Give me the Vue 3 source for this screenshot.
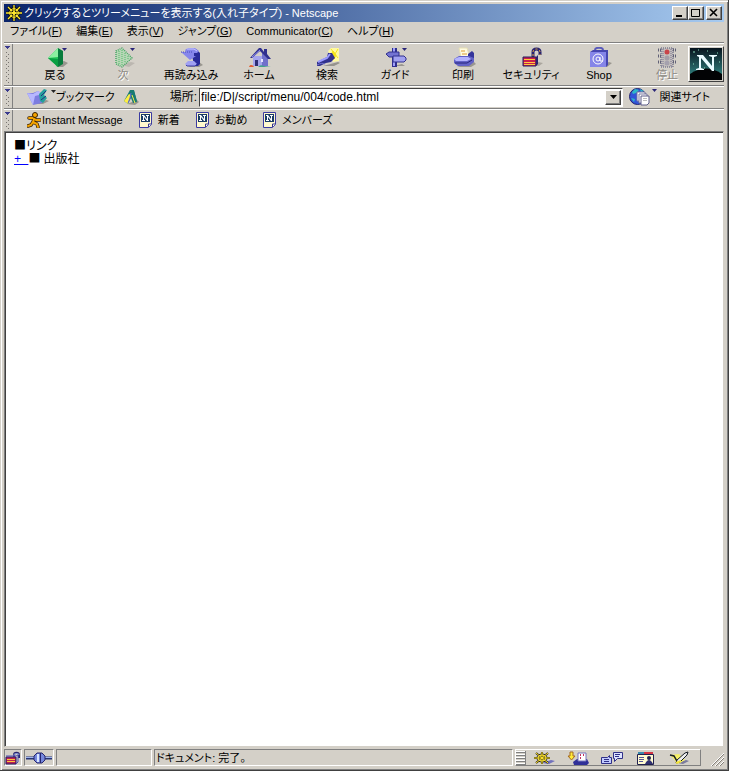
<script setup>
import { ref } from 'vue'

const title = 'クリックするとツリーメニューを表示する(入れ子タイプ) - Netscape'
const address = ref('file:/D|/script/menu/004/code.html')

const menus = [
  { label: 'ファイル', key: 'F' },
  { label: '編集', key: 'E' },
  { label: '表示', key: 'V' },
  { label: 'ジャンプ', key: 'G' },
  { label: 'Communicator', key: 'C' },
  { label: 'ヘルプ', key: 'H' },
]

const tools = [
  { id: 'back', label: '戻る', menu: true },
  { id: 'next', label: '次', menu: true, disabled: true },
  { id: 'reload', label: '再読み込み' },
  { id: 'home', label: 'ホーム' },
  { id: 'search', label: '検索' },
  { id: 'guide', label: 'ガイド', menu: true },
  { id: 'print', label: '印刷' },
  { id: 'security', label: 'セキュリティ' },
  { id: 'shop', label: 'Shop' },
  { id: 'stop', label: '停止', disabled: true },
]

const links = ['新着', 'お勧め', 'メンバーズ']
const components = ['navigator', 'mail', 'news', 'addressbook', 'composer']
const componentNames = ['Navigator', 'メール', 'ニュース', 'アドレス帳', 'Composer']
</script>

<template>
  <div class="window">
    <header class="titlebar">
      <svg class="app-icon" viewBox="0 0 16 16" aria-hidden="true">
        <path d="M8 0v16M0 8h16M2 2l12 12M14 2L2 14" stroke="#111" stroke-width="3" />
        <circle cx="8" cy="8" r="4.5" fill="none" stroke="#111" stroke-width="3" />
        <path d="M8 0v16M0 8h16M2 2l12 12M14 2L2 14" stroke="#ffe92e" stroke-width="1.3" />
        <circle cx="8" cy="8" r="4.3" fill="none" stroke="#ffe92e" />
        <path d="M6 6h1v1H6zM9 6h1v1H9zM6 9h1v1H6zM9 9h1v1H9z" fill="#111" />
      </svg>
      <h1>{{ title }}</h1>
      <div class="captions">
        <button type="button" class="caption" aria-label="最小化">
          <svg viewBox="0 0 12 10"><path d="M2 8h6" stroke="#000" stroke-width="2" /></svg>
        </button>
        <button type="button" class="caption" aria-label="最大化">
          <svg viewBox="0 0 12 10"><path d="M1.500 1.500h8v7h-8z" fill="none" stroke="#000" /><path d="M1 1h9v1H1z" /></svg>
        </button>
        <button type="button" class="caption close" aria-label="閉じる">
          <svg viewBox="0 0 12 10"><path d="M2 1l7 7M9 1L2 8" stroke="#000" stroke-width="1.6" /></svg>
        </button>
      </div>
    </header>

    <nav class="menubar">
      <button v-for="m in menus" :key="m.key" type="button">{{ m.label }}(<u>{{ m.key }}</u>)</button>
    </nav>

    <div class="bar tools">
      <button type="button" class="grip" aria-label="ツールバーを隠す"></button>
      <div class="tool-list">
        <button v-for="t in tools" :key="t.id" type="button" class="tool" :disabled="t.disabled">
          <svg class="tool-icon" viewBox="-3 0 28 21" aria-hidden="true">
            <g v-if="t.id === 'back'">
              <path d="M11 17l9-3 4 2-5 4h-6z" fill="#99968f" />
              <path d="M4 11L14 1v19z" fill="#22c555" />
              <path d="M4 11L14 1v9z" fill="#8cf0a0" />
              <path d="M14 1l5 3v13l-5 3z" fill="#087c3d" />
              <path d="M4 11l10 9v-8z" fill="#0a9f43" />
            </g>
            <g v-else-if="t.id === 'next'">
              <path d="M9 18l10-3 4 1-6 4z" fill="#bbb7b0" />
              <path d="M4 4l6-3 10 10-10 9-6-3z" fill="#b7d6b6" />
              <path d="M4 4l6-3 10 10-10 9-6-3z" fill="none" stroke="#42a360" stroke-width="1.4" stroke-dasharray="1 1" />
              <path d="M7 4v14M10 3v16M13 6v10M16 9v4" stroke="#52bd6b" stroke-dasharray="1 1" />
            </g>
            <g v-else-if="t.id === 'reload'">
              <path d="M8 20l11-5 4 3-4 2z" fill="#99968f" />
              <path d="M11 4l5-2 4 4v11l-2 2h-4l-1-6z" fill="#292a99" />
              <path d="M5 3l3-2h7l4 3-2 2h-3v3h2l-6 4-9-8h5z" fill="#8585ec" />
              <path d="M1 5h12" stroke="#4a4ab8" stroke-dasharray="1 1" />
              <path d="M7 2h7l3 2" fill="none" stroke="#c9c9ff" />
              <path d="M8 14h6l3 3-2 2H7l-2-2z" fill="#a0a0f2" />
              <path d="M6 18l1 1h8l2-2" fill="none" stroke="#3c3ca8" />
            </g>
            <g v-else-if="t.id === 'home'">
              <path d="M5 9h15v10H5z" fill="#a5a5ed" />
              <path d="M14 5l6 6v8h-6z" fill="#7070cb" />
              <path d="M2 11L11 1h2l3 4V2h3v5l4 5h-3l-8-8-8 7z" fill="#30308e" />
              <path d="M4 10l8-7" stroke="#9191f1" />
              <path d="M7 13h3v6H7z" fill="#2e2d74" />
              <path d="M13 12h2v3h-2z" fill="#e5e5ff" />
              <path d="M1 20c1-3 4-2 5 0z" fill="#e35d32" />
              <path d="M10 20c2-2 4-2 6-1l7 1z" fill="#41a08d" />
            </g>
            <g v-else-if="t.id === 'search'">
              <path d="M12 4l3-3h8v13l-6 1z" fill="#fff9a0" />
              <path d="M17 4l3 4-2 4-3-4zM15 2l7 9M22 2l-6 10" fill="#f3e51b" stroke="#f3e51b" />
              <path d="M7 19l15-4 2 1-6 3z" fill="#96938d" />
              <path d="M1 15l10-5 1-4h4l3 5-4 4-5 1-6 3H1z" fill="#31318e" />
              <path d="M2 15l9-4 3-4" fill="none" stroke="#9b9bff" stroke-width="2" />
              <path d="M1 18c4-2 6-2 8-1" fill="none" stroke="#7171cc" />
            </g>
            <g v-else-if="t.id === 'guide'">
              <path d="M9 19l9-2 3 2z" fill="#99968f" />
              <path d="M8 1h5v19H8z" fill="#30308e" />
              <path d="M10 1v18" stroke="#a0a0fa" stroke-width="2" />
              <path d="M2 7l3-2h10v5H5z" fill="#7373d2" stroke="#30308e" />
              <path d="M9 9h11l2 2v2l-2 2H9z" fill="#a1a1f0" stroke="#30308e" />
            </g>
            <g v-else-if="t.id === 'print'">
              <path d="M5 19l17-4 2 2-5 3H8z" fill="#99968f" />
              <path d="M7 1l8 0 3 10H9z" fill="#fffbe0" stroke="#e6dfb4" />
              <path d="M9 4h4M10 7h5" stroke="#de9d31" />
              <path d="M16 7l4-3 2 2v7h-6z" fill="#34349b" />
              <path d="M2 12l5-3h10l5 2v4l-5 4H6l-4-3z" fill="#6262c7" />
              <path d="M2 12l5-2h9l3 2-4 2H4z" fill="#b3b3ff" />
              <path d="M3 16h12l5-3" fill="none" stroke="#25257d" />
            </g>
            <g v-else-if="t.id === 'security'">
              <path d="M7 19l11-4 5 1-4 3z" fill="#aaa69e" />
              <path d="M13 10V5c0-4 7-4 7 0v3" fill="none" stroke="#292471" stroke-width="3" />
              <path d="M13 9V5c0-4 7-4 7 0v3" fill="none" stroke="#e3a43c" stroke-dasharray="2 2" />
              <path d="M3 10h13v9H3z" fill="#c91e4d" stroke="#25215f" />
              <path d="M4 12.500h11M4 15.500h11M4 17.500h11" stroke="#ffc93b" />
              <path d="M16 10l2-2v9l-2 2z" fill="#29256e" />
            </g>
            <g v-else-if="t.id === 'shop'">
              <path d="M7 20l14-5 3 1-5 4z" fill="#99968f" />
              <path d="M7 6V3c0-3 8-3 8 0v3" fill="none" stroke="#5959ba" stroke-width="2" />
              <path d="M2 5l3-2h15v15l-2 2H2z" fill="#4646b0" />
              <path d="M2 5h16v15H2z" fill="#8585e8" />
              <circle cx="10" cy="12" r="5" fill="none" stroke="#fff" />
              <circle cx="10" cy="12" r="2" fill="none" stroke="#fff" />
              <path d="M12 10v4h3" fill="none" stroke="#fff" />
            </g>
            <g v-else>
              <path d="M5 1h12v19H5z" fill="#c4c0bd" stroke="#555578" stroke-dasharray="1 1" />
              <path d="M2 3h3M2 9h3M2 15h3M17 3h4M17 9h4M17 15h4" stroke="#606076" stroke-width="3" stroke-dasharray="1 1" />
              <circle cx="11" cy="5" r="2.500" fill="#c94449" />
              <circle cx="11" cy="11" r="2.500" fill="#a59fa8" />
              <circle cx="11" cy="16" r="2.500" fill="#a5a1ae" />
              <path d="M7 2v17M15 2v17" stroke="#777092" stroke-dasharray="1 1" />
            </g>
            <path v-if="t.menu" d="M18 1h5l-2.500 3z" fill="#292477" />
          </svg>
          <span>{{ t.label }}</span>
        </button>
      </div>
      <a class="logo" href="#" aria-label="Netscape">
        <svg viewBox="0 0 32 32" aria-hidden="true">
          <defs>
            <linearGradient id="sky" x1="0" y1="0" x2="0" y2="1">
              <stop offset="0" stop-color="#07131d" />
              <stop offset="1" stop-color="#36928e" />
            </linearGradient>
          </defs>
          <path fill="url(#sky)" d="M0 0h32v32H0z" />
          <path d="M0 26q16-11 32 0v6H0z" fill="#020305" />
          <path d="M3 4h2M8 2h1M27 5h1M29 14h1M3 16h1M17 3h1M14 20h1" stroke="#8db" />
          <path d="M7 7h6l9 11V9l-3-1V7h8v1l-3 1v14h-2L11 10v10l3 1v1H6v-1l3-1V9L7 8z" fill="#e9fbff" />
        </svg>
      </a>
    </div>

    <div class="bar location">
      <button type="button" class="grip" aria-label="場所ツールバーを隠す"></button>
      <button type="button" class="bookmark">
        <svg class="bookmark-icon" viewBox="0 0 30 18" aria-hidden="true">
          <path d="M8 16l12-4 3 1-6 3z" fill="#99968f" />
          <path d="M1 5l6 0 5-2 5 3-1 9-9 2z" fill="#7d7de0" />
          <path d="M1 5l6 12 2-9 8-2-5-3-5 3z" fill="#b7b7ff" />
          <path d="M13 6l5-5 3 1-3 5 3 3-4 5-3-2z" fill="#24a09d" />
          <path d="M15 8l5-5M15 12l5-4" stroke="#25317d" />
          <path d="M25 2h5l-2.500 3z" fill="#222" />
        </svg>
        <span>ブックマーク</span>
      </button>
      <button type="button" class="quickfile" aria-label="ブックマーク登録">
        <svg viewBox="0 0 17 18" aria-hidden="true">
          <path d="M4 16l10-4 2 2-4 3z" fill="#99968f" />
          <path d="M7 2h4l3 12-4 1-2-5-3 6-4-3z" fill="#187b73" />
          <path d="M6 6l2 1-3 9-4-3z" fill="#ffef43" />
          <path d="M8 5l-1 5-2 5" stroke="#6064ce" fill="none" />
          <path d="M9 7l3 8" stroke="#ffef43" />
          <path d="M10 3l3 10" stroke="#187b73" stroke-width="2" />
        </svg>
      </button>
      <label for="address">場所:</label>
      <div class="combo">
        <input id="address" v-model="address" type="text" spellcheck="false">
        <button type="button" aria-label="履歴を表示">
          <svg viewBox="0 0 7 4"><path d="M0 0h7L3.500 4z" /></svg>
        </button>
      </div>
      <button type="button" class="related">
        <svg class="related-icon" viewBox="0 0 28 18" aria-hidden="true">
          <circle cx="8.500" cy="8.500" r="8" fill="#3155d8" stroke="#22226e" />
          <path d="M3 4l3-3 4 1-3 3-3 1zM2 10l4 1-1 3zM11 1l4 2-3 1z" fill="#2db8c7" />
          <path d="M8 4h8v9H8z" fill="#fff" stroke="#77779f" />
          <path d="M10 6h8v9h-8z" fill="#fff" stroke="#77779f" />
          <path d="M12 8h8v7l-2 2h-6z" fill="#fff" stroke="#5c5c88" />
          <path d="M14 10.500h4M14 12.500h4" stroke="#bbb" />
          <path d="M23 1h5l-2.500 3z" fill="#292477" />
        </svg>
        <span>関連サイト</span>
      </button>
    </div>

    <div class="bar personal">
      <button type="button" class="grip" aria-label="個人ツールバーを隠す"></button>
      <a class="im" href="#">
        <svg class="runner" viewBox="0 0 14 16" aria-hidden="true">
          <g fill="none" stroke-linecap="round" stroke-linejoin="round">
            <path d="M2 6l4 0 3 2 4 0M7 7l-1 3-2 3-3 1M6 10l4 2 1 3" stroke="#392000" stroke-width="3.500" />
            <path d="M2 6l4 0 3 2 4 0M7 7l-1 3-2 3-3 1M6 10l4 2 1 3" stroke="#f5a400" stroke-width="2" />
          </g>
          <circle cx="8" cy="3" r="2.500" fill="#f5a400" stroke="#392000" />
        </svg>
        <span>Instant Message</span>
      </a>
      <a v-for="l in links" :key="l" class="page-link" href="#">
        <svg class="page-icon" viewBox="0 0 13 16" aria-hidden="true">
          <path d="M.5 .5h12v12l-3 3h-9z" fill="#fff9ce" stroke="#3b3ba2" />
          <path d="M2 2h9v8H2z" fill="#173a65" />
          <path d="M3 3h2l3 4V4H7V3h3v1H9v5H8L5 5v3h1v1H3V8h1V4H3z" fill="#fff" />
          <path d="M9.500 15v-3h3" fill="#fff" stroke="#33338b" />
        </svg>
        <span>{{ l }}</span>
      </a>
    </div>

    <main class="page">
      <div>■リンク</div>
      <div><a href="#">+ </a>■ 出版社</div>
    </main>

    <footer class="status">
      <button type="button" class="cell lock" aria-label="セキュリティ情報">
        <svg viewBox="0 0 16 14" aria-hidden="true">
          <path d="M9 6V4c0-3 5-3 5 0v3" fill="none" stroke="#29256e" stroke-width="2" />
          <path d="M9 5V4c0-2 5-2 5 0" fill="none" stroke="#9bb0f0" />
          <path d="M1 6h10v7H1z" fill="#bd2352" stroke="#24206b" />
          <path d="M2 8.500h8M2 10.500h8" stroke="#ffc53c" />
          <path d="M1 5h10l2-1v7l-2 2" fill="none" stroke="#4e4eae" />
        </svg>
      </button>
      <div class="cell plug">
        <svg viewBox="0 0 28 12" aria-hidden="true">
          <path d="M1 6h26" stroke="#273475" stroke-width="3" />
          <path d="M1 5.500h26" stroke="#a0b5ed" />
          <path d="M9 4l3-3h5l3 3v4l-3 3h-5L9 8z" fill="#7587dc" stroke="#25256f" />
          <path d="M13 2v8" stroke="#d9e5ff" stroke-width="2" />
          <path d="M15.500 1v10" stroke="#25256f" />
        </svg>
      </div>
      <div class="cell progress"></div>
      <div class="cell message">ドキュメント: 完了。</div>
      <div class="components">
        <div class="dock-grip"></div>
        <button v-for="(c, i) in components" :key="c" type="button" :aria-label="componentNames[i]">
          <svg viewBox="0 0 24 14" aria-hidden="true">
            <g v-if="c === 'navigator'" fill="none">
              <path d="M10 12l9-3 4 1-6 3z" fill="#7171bd" />
              <path d="M10 1v12M2 7h16M4 2l12 10M16 2L4 12" stroke="#252012" stroke-width="2" />
              <ellipse cx="10" cy="7" rx="5" ry="4" stroke="#252012" />
              <path d="M10 1v12M2 7h16M4 2l12 10M16 2L4 12" stroke="#ffe52a" />
              <ellipse cx="10" cy="7" rx="4" ry="3" stroke="#ffe52a" />
            </g>
            <g v-else-if="c === 'mail'">
              <path d="M7 11l4-3h10l2 4-2 2H8z" fill="#303098" />
              <path d="M12 2h8v8h-8z" fill="#fff" stroke="#7777bd" />
              <path d="M14 4h1M17 4h1M14 7h1" stroke="#c43160" stroke-width="2" />
              <path d="M4 1h3v4h2l-3.500 4L2 5h2z" fill="#ffeb37" stroke="#a66b20" />
            </g>
            <g v-else-if="c === 'news'" stroke="#303088">
              <path d="M1.500 6.500h6l2-2v2h2v6h-10z" fill="#c1cbff" />
              <path d="M13.500 1.500h9v6h-5l-3 3v-3h-1z" fill="#dde3ff" />
              <path d="M4 8.500h5M4 10.500h5M15 3.500h5M15 5.500h4" />
            </g>
            <g v-else-if="c === 'addressbook'">
              <path d="M3.500 3.500h16v10h-16z" fill="#fffbd0" stroke="#20204f" />
              <path d="M4 2h6" stroke="#3a8aaf" stroke-width="2" />
              <path d="M10 2h9" stroke="#d43545" stroke-width="2" />
              <circle cx="15" cy="7" r="2" fill="#202052" />
              <path d="M11 13q4-8 8 0z" fill="#303070" />
              <path d="M5 6.500h5M5 8.500h5M5 10.500h4" stroke="#55559b" />
            </g>
            <g v-else>
              <path d="M9 12l9-3 3 1-6 3z" fill="#7b7b9d" />
              <path d="M2 4l9-1 6 6-7 4z" fill="#f6f066" />
              <path d="M2 4l4 1 4 7" fill="none" stroke="#151b24" stroke-width="1.500" />
              <path d="M9 9l8-7 3-1-1 3-7 7-4 1z" fill="#eee" stroke="#151b24" />
              <path d="M8 12l5-2" stroke="#f6e63c" stroke-width="2" />
            </g>
          </svg>
        </button>
      </div>
      <svg class="resize" viewBox="0 0 14 14" aria-hidden="true">
        <path d="M1 14L14 1M5 14l9-9M9 14l5-5" stroke="#fff" />
        <path d="M2 14L14 2M6 14l8-8M10 14l4-4" stroke="#858079" />
      </svg>
    </footer>
  </div>
</template>

<style>
body {
  margin: 0;
  background: #d4d0c8;
}
</style>

<style scoped>
* {
  box-sizing: border-box;
}

.window {
  display: flex;
  flex-direction: column;
  min-height: 100vh;
  padding: 4px;
  color: #000;
  background: #d4d0c8;
  border-right: 1px solid #404040;
  border-bottom: 1px solid #404040;
  box-shadow: inset 1px 1px #d4d0c8, inset 2px 2px #fff, inset -1px -1px #808080;
  font: 11px/14px "Liberation Sans", "Noto Sans CJK JP", sans-serif;
  font-feature-settings: "palt";
}

button {
  padding: 0;
  border: 0;
  color: inherit;
  background: none;
  font: inherit;
  font-feature-settings: inherit;
  white-space: nowrap;
}

a {
  color: inherit;
  text-decoration: none;
}

svg {
  display: block;
  flex: none;
}

.titlebar {
  display: flex;
  align-items: center;
  height: 18px;
  padding: 0 2px;
  color: #fff;
  background: linear-gradient(90deg, #0a246a, #a6caf0);
}

.app-icon {
  width: 16px;
  height: 16px;
}

h1 {
  flex: 1;
  margin: 0 0 0 2px;
  overflow: hidden;
  font-size: 11px;
  font-weight: 400;
  white-space: nowrap;
}

.captions {
  display: flex;
}

.caption {
  display: grid;
  place-items: center;
  width: 16px;
  height: 14px;
  background: #d4d0c8;
  border: 1px solid;
  border-color: #fff #404040 #404040 #fff;
  box-shadow: inset -1px -1px #808080;
}

.caption svg {
  width: 12px;
  height: 10px;
}

.close {
  margin-left: 2px;
}

.menubar {
  display: flex;
  gap: 14px;
  height: 20px;
  padding: 0 6px 2px;
}

.bar {
  display: flex;
  align-items: center;
  border-top: 1px solid #808080;
  box-shadow: inset 0 1px #fff;
}

.grip {
  display: flex;
  flex: none;
  align-self: stretch;
  width: 9px;
  margin-top: 1px;
  padding: 8px 2px 2px;
  border-right: 1px solid #808080;
  background:
    linear-gradient(#3b3b8e, #3b3b8e) 1px 2px / 5px 1px no-repeat,
    linear-gradient(#3b3b8e, #3b3b8e) 2px 3px / 3px 1px no-repeat,
    linear-gradient(#3b3b8e, #3b3b8e) 3px 4px / 1px 1px no-repeat;
}

.grip::after {
  flex: 1;
  align-self: stretch;
  content: "";
  background:
    linear-gradient(#77736f 1px, transparent 1px) 0 0 / 1px 4px repeat-y,
    linear-gradient(#77736f 1px, transparent 1px) 2px 2px / 1px 4px repeat-y;
}

.tools {
  height: 43px;
}

.tool-list {
  display: flex;
  flex: 1;
  min-width: 0;
  padding-left: 8px;
}

.tool {
  display: flex;
  flex: 1 1 0;
  flex-direction: column;
  align-items: center;
  min-width: 0;
  padding-top: 1px;
}

.tool:last-child {
  flex: 0 0 55px;
  padding-left: 13px;
}

.tool-icon {
  width: 28px;
  height: 21px;
}

.tool:disabled {
  color: #8c8983;
  text-shadow: 1px 1px #fff;
}

.logo {
  flex: none;
  padding: 1px;
  border: 1px solid;
  border-color: #fff #404040 #404040 #fff;
}

.logo svg {
  width: 32px;
  height: 32px;
}

.location {
  height: 23px;
}

.bookmark,
.related {
  display: flex;
  align-items: center;
}

.bookmark {
  margin-left: 13px;
}

.bookmark-icon {
  width: 30px;
  height: 18px;
}

.quickfile {
  margin-left: 8px;
}

.quickfile svg {
  width: 17px;
  height: 18px;
}

label {
  margin: 0 2px 0 30px;
  font-size: 12px;
  white-space: nowrap;
}

.combo {
  display: flex;
  flex: 1;
  height: 19px;
  min-width: 0;
  padding: 1px;
  background: #fff;
  border: 1px solid;
  border-color: #404040 #fff #fff #404040;
}

input {
  flex: 1;
  min-width: 0;
  padding: 0;
  border: 0;
  outline: 0;
  color: #000;
  background: #fff;
  font: inherit;
  font-size: 12px;
}

.combo button {
  display: grid;
  place-items: center;
  width: 16px;
  background: #d4d0c8;
  border: 1px solid;
  border-color: #fff #404040 #404040 #fff;
  box-shadow: inset -1px -1px #808080;
}

.combo button svg {
  width: 7px;
  height: 4px;
}

.related {
  gap: 2px;
  margin: 0 14px 0 6px;
}

.related-icon {
  width: 28px;
  height: 18px;
}

.personal {
  height: 23px;
}

.im,
.page-link {
  display: flex;
  align-items: center;
}

.im {
  margin-left: 14px;
}

.runner {
  width: 14px;
  height: 16px;
  margin-right: 1px;
}

.page-link {
  gap: 6px;
  margin-left: 16px;
}

.page-icon {
  width: 13px;
  height: 16px;
}

.page {
  flex: 1;
  padding: 8px 9px;
  background: #fff;
  border: 1px solid;
  border-color: #808080 #d4d0c8 #d4d0c8 #808080;
  box-shadow: inset 1px 1px #404040;
  font: 12px/13px Roboto, "Noto Sans CJK JP", sans-serif;
  font-feature-settings: "palt";
}

.page a {
  color: #00f;
  font-family: "Liberation Mono", monospace;
  text-decoration: underline;
  white-space: pre;
}

.status {
  display: flex;
  gap: 2px;
  height: 19px;
  padding-top: 2px;
}

.cell {
  display: flex;
  align-items: center;
  border: 1px solid;
  border-color: #808080 #fff #fff #808080;
}

.lock {
  width: 18px;
}

.lock svg {
  width: 16px;
  height: 14px;
}

.plug {
  width: 30px;
}

.plug svg {
  width: 28px;
  height: 12px;
}

.progress {
  width: 96px;
}

.message {
  flex: 1;
  padding-left: 1px;
  white-space: nowrap;
}

.components {
  display: flex;
  align-items: center;
  gap: 10px;
  width: 186px;
  border: 1px solid;
  border-color: #fff #808080 #808080 #fff;
}

.dock-grip {
  width: 10px;
  height: 14px;
  margin-right: -4px;
  background: repeating-linear-gradient(#fff 0 1px, #808080 1px 2px, #d4d0c8 2px 3px);
  border-right: 1px solid #808080;
}

.components svg {
  width: 24px;
  height: 14px;
}

.resize {
  align-self: end;
  width: 14px;
  height: 14px;
  margin-left: 7px;
}
</style>
